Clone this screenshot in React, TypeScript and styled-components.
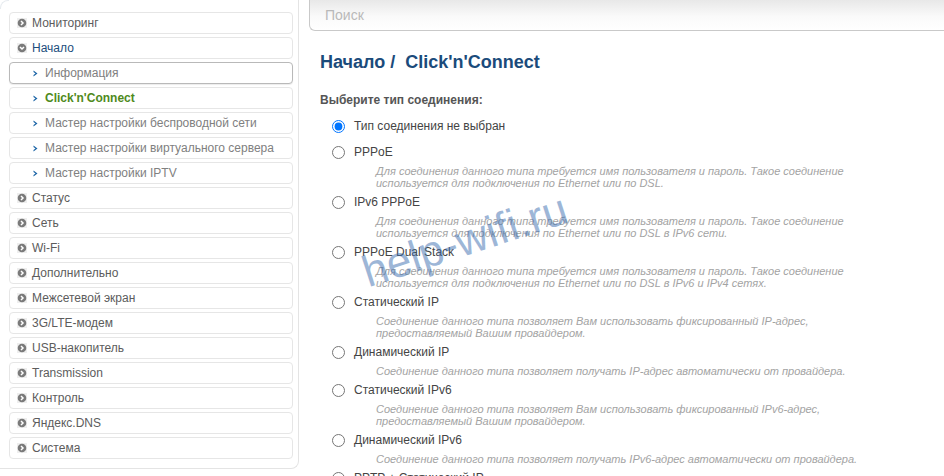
import styled, { createGlobalStyle } from "styled-components";

const GlobalStyle = createGlobalStyle`
  html, body {
    margin: 0;
    padding: 0;
    background: #fff;
    font-family: "Liberation Sans", Arial, sans-serif;
    overflow: hidden;
  }
`;

type MenuItem = {
  title: string;
  sub?: boolean;
  open?: boolean;
  active?: boolean;
  hover?: boolean;
};

const menu: MenuItem[] = [
  { title: "Мониторинг" },
  { title: "Начало", open: true },
  { title: "Информация", sub: true, hover: true },
  { title: "Click'n'Connect", sub: true, active: true },
  { title: "Мастер настройки беспроводной сети", sub: true },
  { title: "Мастер настройки виртуального сервера", sub: true },
  { title: "Мастер настройки IPTV", sub: true },
  { title: "Статус" },
  { title: "Сеть" },
  { title: "Wi-Fi" },
  { title: "Дополнительно" },
  { title: "Межсетевой экран" },
  { title: "3G/LTE-модем" },
  { title: "USB-накопитель" },
  { title: "Transmission" },
  { title: "Контроль" },
  { title: "Яндекс.DNS" },
  { title: "Система" },
];

type Option = { label: string; desc?: string[]; checked?: boolean };

const options: Option[] = [
  { label: "Тип соединения не выбран", checked: true },
  {
    label: "PPPoE",
    desc: [
      "Для соединения данного типа требуется имя пользователя и пароль. Такое соединение",
      "используется для подключения по Ethernet или по DSL.",
    ],
  },
  {
    label: "IPv6 PPPoE",
    desc: [
      "Для соединения данного типа требуется имя пользователя и пароль. Такое соединение",
      "используется для подключения по Ethernet или по DSL в IPv6 сети.",
    ],
  },
  {
    label: "PPPoE Dual Stack",
    desc: [
      "Для соединения данного типа требуется имя пользователя и пароль. Такое соединение",
      "используется для подключения по Ethernet или по DSL в IPv6 и IPv4 сетях.",
    ],
  },
  {
    label: "Статический IP",
    desc: [
      "Соединение данного типа позволяет Вам использовать фиксированный IP-адрес,",
      "предоставляемый Вашим провайдером.",
    ],
  },
  {
    label: "Динамический IP",
    desc: ["Соединение данного типа позволяет получать IP-адрес автоматически от провайдера."],
  },
  {
    label: "Статический IPv6",
    desc: [
      "Соединение данного типа позволяет Вам использовать фиксированный IPv6-адрес,",
      "предоставляемый Вашим провайдером.",
    ],
  },
  {
    label: "Динамический IPv6",
    desc: ["Соединение данного типа позволяет получать IPv6-адрес автоматически от провайдера."],
  },
  { label: "PPTP + Статический IP" },
];

const CircleIcon = ({ down }: { down?: boolean }) => (
  <svg width="10" height="10" viewBox="0 0 10 10">
    <rect width="10" height="10" fill="#eeeeee" />
    <circle cx="5" cy="5" r="4.3" fill="#7a7a7a" />
    {down ? (
      <path d="M3 4 L5 6 L7 4" stroke="#fff" strokeWidth="1.5" fill="none" />
    ) : (
      <path d="M4 3 L6 5 L4 7" stroke="#fff" strokeWidth="1.5" fill="none" />
    )}
  </svg>
);

const SubArrow = () => (
  <svg width="5" height="7" viewBox="0 0 5 7">
    <path d="M0.5 0.5 L4.5 3.5 L0.5 6.5 L0.5 5 L2.5 3.5 L0.5 2 Z" fill="#1a64a6" />
  </svg>
);

const App = () => {
  return (
    <>
      <GlobalStyle />
      <Page>
        <Sidebar>
          {menu.map((item) => (
            <MenuRow key={item.title} $sub={item.sub} $hover={item.hover}>
              {item.sub ? <SubArrow /> : <CircleIcon down={item.open} />}
              <MenuText $sub={item.sub} $open={item.open} $active={item.active}>
                {item.title}
              </MenuText>
            </MenuRow>
          ))}
        </Sidebar>
        <Main>
          <Search placeholder="Поиск" />
          <Content>
            <Heading>Начало /&nbsp; Click'n'Connect</Heading>
            <Subtitle>Выберите тип соединения:</Subtitle>
            <OptionList>
              {options.map((opt) => (
                <OptionBlock key={opt.label} $plain={!opt.desc}>
                  <OptionRow>
                    <Radio type="radio" name="conn" defaultChecked={opt.checked} />
                    <OptionLabel>{opt.label}</OptionLabel>
                  </OptionRow>
                  {opt.desc && (
                    <Desc>
                      {opt.desc.map((line) => (
                        <div key={line}>{line}</div>
                      ))}
                    </Desc>
                  )}
                </OptionBlock>
              ))}
            </OptionList>
          </Content>
          <Watermark>help-wifi.ru</Watermark>
        </Main>
      </Page>
    </>
  );
};

export default App;

const Page = styled.div`
  display: flex;
  align-items: flex-start;
  width: 944px;
  height: 476px;
  overflow: hidden;
  background: #fff;
`;

const Sidebar = styled.div`
  width: 284px;
  flex-shrink: 0;
  height: 456px;
  padding: 12px 5px 0 9px;
  display: flex;
  flex-direction: column;
  gap: 3px;
  border: 1px solid #e4e4e4;
  border-left: none;
  border-top: none;
  border-radius: 0 0 8px 0;
  background: #fff;
  position: relative;
  &::before {
    content: "";
    position: absolute;
    left: 0;
    top: 0;
    width: 8px;
    height: 8px;
    border-top-left-radius: 8px;
    border-top: 1px solid #e8ecf0;
    border-left: 1px solid #e8ecf0;
  }
`;

const MenuRow = styled.div<{ $sub?: boolean; $hover?: boolean }>`
  height: 20px;
  flex-shrink: 0;
  display: flex;
  align-items: center;
  gap: ${(p) => (p.$sub ? "7px" : "5px")};
  padding-left: ${(p) => (p.$sub ? "23px" : "7px")};
  border: 1px solid ${(p) => (p.$hover ? "#b9b9b9" : "#e6e6e6")};
  border-radius: 4px;
  background: #fff;
  box-shadow: ${(p) => (p.$hover ? "0 1px 1px rgba(0,0,0,0.08)" : "none")};
`;

const MenuText = styled.span<{ $sub?: boolean; $open?: boolean; $active?: boolean }>`
  font-size: 12px;
  line-height: 20px;
  white-space: nowrap;
  color: ${(p) => (p.$active ? "#4f8a1c" : p.$open ? "#1c4d7c" : p.$sub ? "#808080" : "#5c5c5c")};
  font-weight: ${(p) => (p.$active ? "bold" : "normal")};
`;

const Main = styled.div`
  flex: 1;
  min-width: 0;
  margin-left: 10px;
  position: relative;
  height: 476px;
`;

const Search = styled.input`
  display: block;
  width: calc(100% + 10px);
  height: 31px;
  box-sizing: border-box;
  margin: 0;
  border: 1px solid #c9c9c9;
  border-top: none;
  border-right: none;
  border-radius: 0 0 0 6px;
  background: linear-gradient(#e8e8e8, #fafafa 55%, #fff);
  padding: 0 15px;
  font-family: "Liberation Sans", Arial, sans-serif;
  font-size: 14px;
  outline: none;
  &::placeholder {
    color: #b9b9b9;
  }
`;

const Content = styled.div`
  padding-left: 11px;
`;

const Heading = styled.div`
  margin-top: 21px;
  font-size: 18px;
  line-height: 20px;
  font-weight: bold;
  color: #1b4b7b;
`;

const Subtitle = styled.div`
  margin-top: 21px;
  font-size: 12px;
  line-height: 15px;
  font-weight: bold;
  color: #555;
`;

const OptionList = styled.div`
  margin-top: 8px;
  display: flex;
  flex-direction: column;
`;

const OptionBlock = styled.div<{ $plain?: boolean }>`
  padding-bottom: ${(p) => (p.$plain ? "6px" : "3px")};
`;

const OptionRow = styled.label`
  height: 20px;
  display: flex;
  align-items: center;
  padding-left: 12px;
  gap: 9px;
`;

const Radio = styled.input`
  width: 13px;
  height: 13px;
  margin: 0;
`;

const OptionLabel = styled.span`
  font-size: 12px;
  color: #444;
`;

const Desc = styled.div`
  margin-top: 3px;
  padding-left: 56px;
  font-size: 11px;
  line-height: 12px;
  font-style: italic;
  color: #a3a3a3;
`;

const Watermark = styled.div`
  position: absolute;
  left: 62px;
  top: 248px;
  font-size: 44px;
  line-height: 48px;
  color: rgba(60, 110, 175, 0.5);
  transform: rotate(-18deg);
  transform-origin: left bottom;
  pointer-events: none;
  white-space: nowrap;
`;
